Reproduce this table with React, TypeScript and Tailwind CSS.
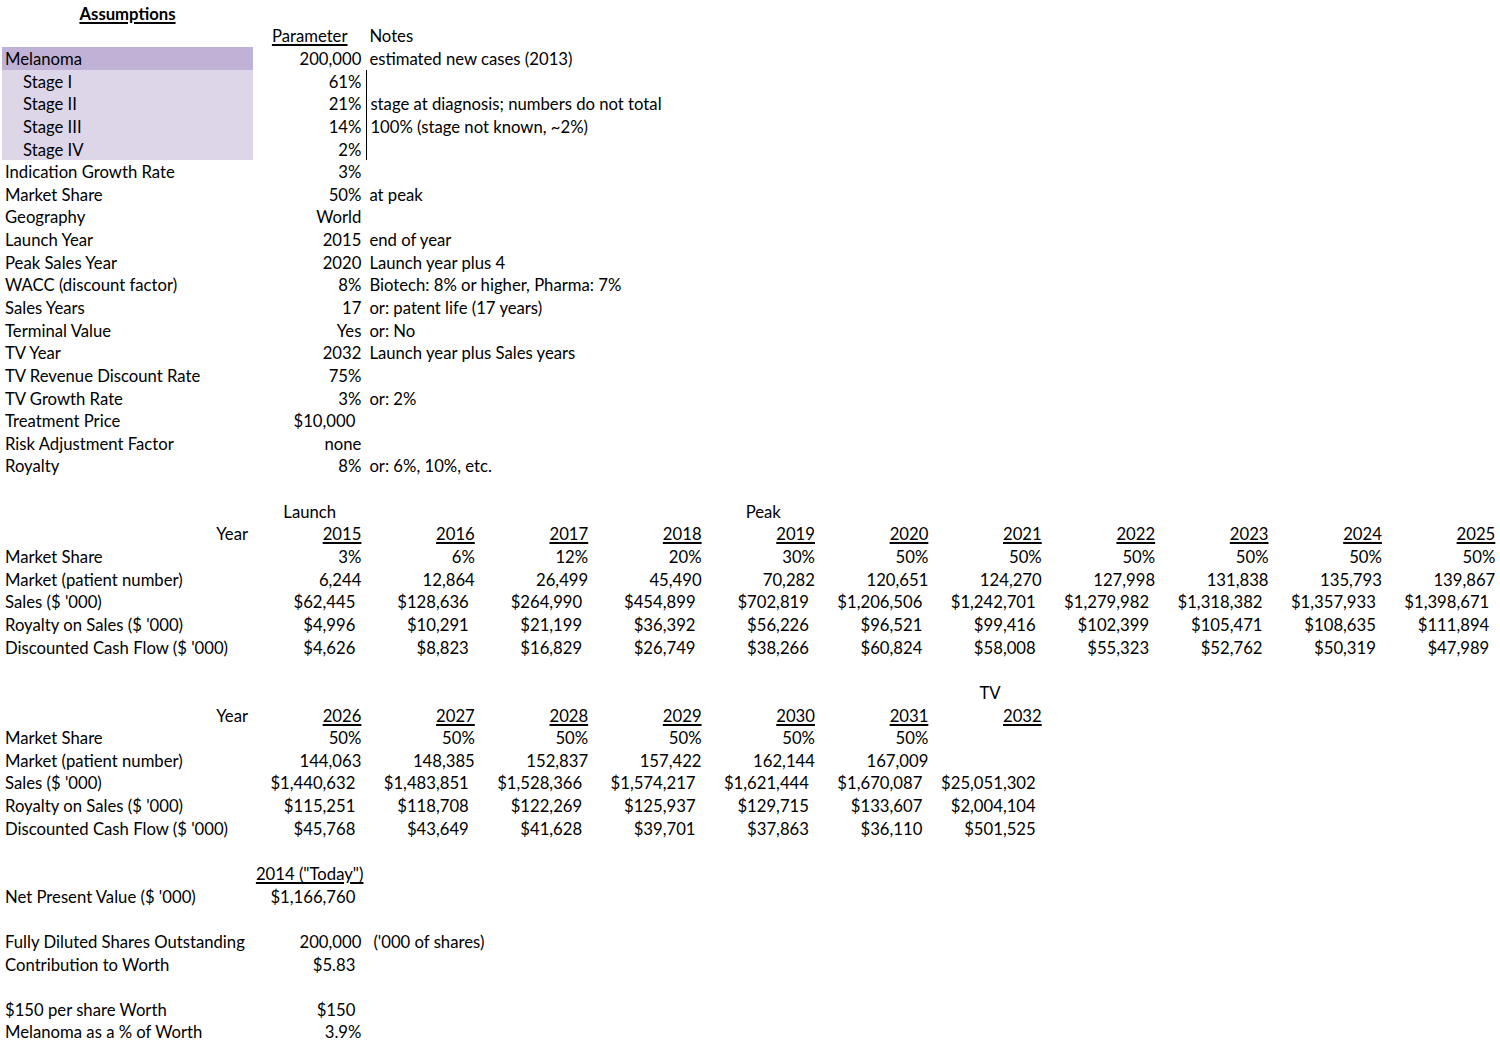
type Cell =
  | string
  | {
      t: string;
      a?: "l" | "r" | "c";
      cur?: boolean;
      u?: boolean;
      b?: boolean;
      indent?: boolean;
      fill?: "dark" | "light";
      line?: boolean;
      pad?: boolean;
    };

type Row = Cell[];

/* ------------ helpers for building cells ------------ */

const R = (t: string): Cell => ({ t, a: "r" });
const L = (t: string): Cell => ({ t, a: "l" });
const C = (t: string): Cell => ({ t, a: "c" });
const $ = (t: string): Cell => ({ t, a: "r", cur: true });
const Y = (t: string): Cell => ({ t, a: "r", u: true });

const stage = (t: string): Cell => ({ t, a: "l", indent: true, fill: "light" });
const bar = (t = ""): Cell => ({ t, a: "l", line: true });

/* ------------ sheet data ------------ */

const rows: Row[] = [
  [{ t: "Assumptions", a: "c", b: true, u: true }],
  ["", { t: "Parameter", a: "c", u: true }, L("Notes")],
  [{ t: "Melanoma", a: "l", fill: "dark" }, R("200,000"), L("estimated new cases (2013)")],
  [stage("Stage I"), R("61%"), bar()],
  [stage("Stage II"), R("21%"), bar("stage at diagnosis; numbers do not total")],
  [stage("Stage III"), R("14%"), bar("100% (stage not known, ~2%)")],
  [stage("Stage IV"), R("2%"), bar()],
  [L("Indication Growth Rate"), R("3%")],
  [L("Market Share"), R("50%"), L("at peak")],
  [L("Geography"), R("World")],
  [L("Launch Year"), R("2015"), L("end of year")],
  [L("Peak Sales Year"), R("2020"), L("Launch year plus 4")],
  [L("WACC (discount factor)"), R("8%"), L("Biotech: 8% or higher, Pharma: 7%")],
  [L("Sales Years"), R("17"), L("or: patent life (17 years)")],
  [L("Terminal Value"), R("Yes"), L("or: No")],
  [L("TV Year"), R("2032"), L("Launch year plus Sales years")],
  [L("TV Revenue Discount Rate"), R("75%")],
  [L("TV Growth Rate"), R("3%"), L("or: 2%")],
  [L("Treatment Price"), $("$10,000")],
  [L("Risk Adjustment Factor"), R("none")],
  [L("Royalty"), R("8%"), L("or: 6%, 10%, etc.")],
  [],
  ["", C("Launch"), "", "", "", C("Peak")],
  [R("Year"), ...["2015", "2016", "2017", "2018", "2019", "2020", "2021", "2022", "2023", "2024", "2025"].map(Y)],
  [L("Market Share"), ...["3%", "6%", "12%", "20%", "30%", "50%", "50%", "50%", "50%", "50%", "50%"].map(R)],
  [
    L("Market (patient number)"),
    ...["6,244", "12,864", "26,499", "45,490", "70,282", "120,651", "124,270", "127,998", "131,838", "135,793", "139,867"].map(R),
  ],
  [
    L("Sales ($ '000)"),
    ...[
      "$62,445",
      "$128,636",
      "$264,990",
      "$454,899",
      "$702,819",
      "$1,206,506",
      "$1,242,701",
      "$1,279,982",
      "$1,318,382",
      "$1,357,933",
      "$1,398,671",
    ].map($),
  ],
  [
    L("Royalty on Sales ($ '000)"),
    ...["$4,996", "$10,291", "$21,199", "$36,392", "$56,226", "$96,521", "$99,416", "$102,399", "$105,471", "$108,635", "$111,894"].map($),
  ],
  [
    L("Discounted Cash Flow ($ '000)"),
    ...["$4,626", "$8,823", "$16,829", "$26,749", "$38,266", "$60,824", "$58,008", "$55,323", "$52,762", "$50,319", "$47,989"].map($),
  ],
  [],
  ["", "", "", "", "", "", "", C("TV")],
  [R("Year"), ...["2026", "2027", "2028", "2029", "2030", "2031", "2032"].map(Y)],
  [L("Market Share"), ...["50%", "50%", "50%", "50%", "50%", "50%"].map(R)],
  [L("Market (patient number)"), ...["144,063", "148,385", "152,837", "157,422", "162,144", "167,009"].map(R)],
  [
    L("Sales ($ '000)"),
    ...["$1,440,632", "$1,483,851", "$1,528,366", "$1,574,217", "$1,621,444", "$1,670,087", "$25,051,302"].map($),
  ],
  [
    L("Royalty on Sales ($ '000)"),
    ...["$115,251", "$118,708", "$122,269", "$125,937", "$129,715", "$133,607", "$2,004,104"].map($),
  ],
  [
    L("Discounted Cash Flow ($ '000)"),
    ...["$45,768", "$43,649", "$41,628", "$39,701", "$37,863", "$36,110", "$501,525"].map($),
  ],
  [],
  ["", { t: '2014 ("Today")', a: "c", u: true }],
  [L("Net Present Value ($ '000)"), $("$1,166,760")],
  [],
  [L("Fully Diluted Shares Outstanding"), R("200,000"), { t: "('000 of shares)", a: "l", pad: true }],
  [L("Contribution to Worth"), $("$5.83")],
  [],
  [L("$150 per share Worth"), $("$150")],
  [L("Melanoma as a % of Worth"), R("3.9%")],
];

/* ------------ rendering ------------ */

function SheetCell({ cell, first }: { cell: Cell; first: boolean }) {
  const c = typeof cell === "string" ? { t: cell, a: "l" as const } : cell;
  const width = first ? "w-[251px]" : "w-[113.4px]";

  const justify =
    c.a === "r" ? "justify-end" : c.a === "c" ? "justify-center" : "justify-start";

  let pad = "";
  if (c.a === "r") pad = c.cur ? "pr-[11px]" : "pr-[5px]";
  else if (c.a === "l") pad = c.indent ? "pl-[21px]" : c.pad ? "pl-[7px]" : "pl-[3px]";

  const fill =
    c.fill === "dark" ? "bg-[#c0b1d6]" : c.fill === "light" ? "bg-[#ddd6e9]" : "";

  return (
    <div
      className={`flex h-full shrink-0 items-center whitespace-nowrap ${width} ${justify} ${pad} ${fill} ${
        c.line ? "border-l-[1.5px] border-black" : ""
      }`}
    >
      {c.t && (
        <span
          className={`pt-[2px] ${c.b ? "font-bold" : ""} ${
            c.u ? "underline decoration-[1.5px] underline-offset-[2px]" : ""
          }`}
        >
          {c.t}
        </span>
      )}
    </div>
  );
}

export default function App() {
  return (
    <div className="min-h-screen bg-white pt-[1.7px] pl-[2px] font-['Lato','Open_Sans',sans-serif] text-[16.7px] leading-none text-black">
      {rows.map((row, i) => (
        <div key={i} className="flex h-[22.65px]">
          {row.map((cell, j) => (
            <SheetCell key={j} cell={cell} first={j === 0} />
          ))}
        </div>
      ))}
    </div>
  );
}
